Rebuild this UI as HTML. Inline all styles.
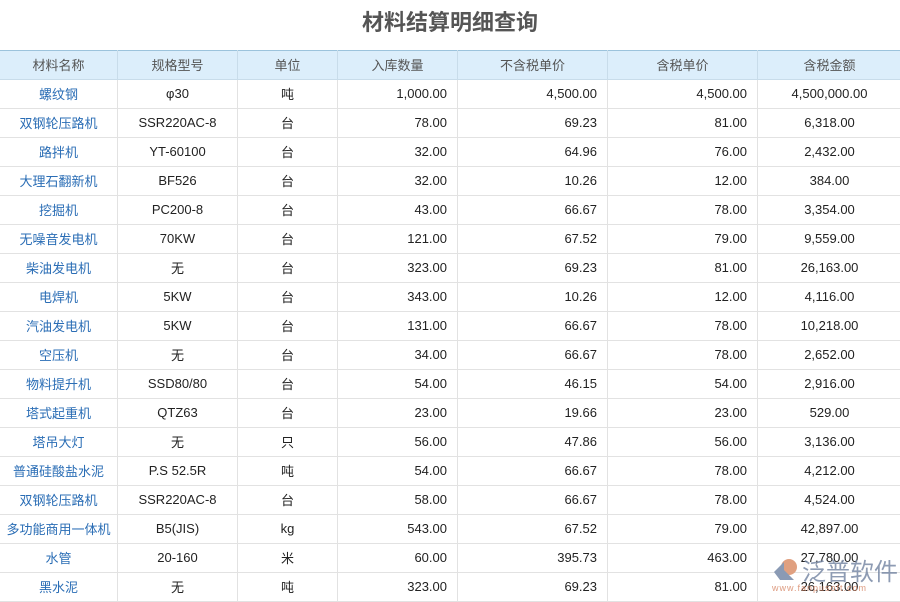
<!DOCTYPE html><html><head><meta charset="utf-8"><style>
body{margin:0;width:900px;height:600px;overflow:hidden;background:#fff;font-family:"Liberation Sans","Noto Sans CJK SC",sans-serif;position:relative}
h1{margin:0;height:50px;line-height:46px;text-align:center;font-size:22px;color:#555;font-weight:bold}
table{border-collapse:collapse;table-layout:fixed;width:902px;margin-left:-1px;font-size:13px;color:#222}
td,th{border:1px solid #e2e2e2;height:26px;padding:0 10px 2px;white-space:nowrap;overflow:hidden}
th{background:#dceefb;color:#555;font-weight:normal;border-color:#c8dcea;border-top:1px solid #9cc3dc}
td:nth-child(1){color:#2a6db5;text-align:center;padding:0 0 2px}
td:nth-child(2),td:nth-child(3),td:nth-child(7){text-align:center}
td:nth-child(4),td:nth-child(5),td:nth-child(6){text-align:right}
.wm{position:absolute;left:802px;top:552px;font-size:24px;color:#7a8aa6;opacity:.85}
.wm small{display:block;font-size:9px;color:#d88a6a;margin-left:-30px;margin-top:-4px;letter-spacing:1px}
</style></head><body>
<h1>材料结算明细查询</h1>
<table><colgroup><col style="width:118px"><col style="width:120px"><col style="width:100px"><col style="width:120px"><col style="width:150px"><col style="width:150px"><col style="width:144px"></colgroup>
<tr><th>材料名称</th><th>规格型号</th><th>单位</th><th>入库数量</th><th>不含税单价</th><th>含税单价</th><th>含税金额</th></tr>
<tr><td>螺纹钢</td><td>φ30</td><td>吨</td><td>1,000.00</td><td>4,500.00</td><td>4,500.00</td><td>4,500,000.00</td></tr>
<tr><td>双钢轮压路机</td><td>SSR220AC-8</td><td>台</td><td>78.00</td><td>69.23</td><td>81.00</td><td>6,318.00</td></tr>
<tr><td>路拌机</td><td>YT-60100</td><td>台</td><td>32.00</td><td>64.96</td><td>76.00</td><td>2,432.00</td></tr>
<tr><td>大理石翻新机</td><td>BF526</td><td>台</td><td>32.00</td><td>10.26</td><td>12.00</td><td>384.00</td></tr>
<tr><td>挖掘机</td><td>PC200-8</td><td>台</td><td>43.00</td><td>66.67</td><td>78.00</td><td>3,354.00</td></tr>
<tr><td>无噪音发电机</td><td>70KW</td><td>台</td><td>121.00</td><td>67.52</td><td>79.00</td><td>9,559.00</td></tr>
<tr><td>柴油发电机</td><td>无</td><td>台</td><td>323.00</td><td>69.23</td><td>81.00</td><td>26,163.00</td></tr>
<tr><td>电焊机</td><td>5KW</td><td>台</td><td>343.00</td><td>10.26</td><td>12.00</td><td>4,116.00</td></tr>
<tr><td>汽油发电机</td><td>5KW</td><td>台</td><td>131.00</td><td>66.67</td><td>78.00</td><td>10,218.00</td></tr>
<tr><td>空压机</td><td>无</td><td>台</td><td>34.00</td><td>66.67</td><td>78.00</td><td>2,652.00</td></tr>
<tr><td>物料提升机</td><td>SSD80/80</td><td>台</td><td>54.00</td><td>46.15</td><td>54.00</td><td>2,916.00</td></tr>
<tr><td>塔式起重机</td><td>QTZ63</td><td>台</td><td>23.00</td><td>19.66</td><td>23.00</td><td>529.00</td></tr>
<tr><td>塔吊大灯</td><td>无</td><td>只</td><td>56.00</td><td>47.86</td><td>56.00</td><td>3,136.00</td></tr>
<tr><td>普通硅酸盐水泥</td><td>P.S 52.5R</td><td>吨</td><td>54.00</td><td>66.67</td><td>78.00</td><td>4,212.00</td></tr>
<tr><td>双钢轮压路机</td><td>SSR220AC-8</td><td>台</td><td>58.00</td><td>66.67</td><td>78.00</td><td>4,524.00</td></tr>
<tr><td>多功能商用一体机</td><td>B5(JIS)</td><td>kg</td><td>543.00</td><td>67.52</td><td>79.00</td><td>42,897.00</td></tr>
<tr><td>水管</td><td>20-160</td><td>米</td><td>60.00</td><td>395.73</td><td>463.00</td><td>27,780.00</td></tr>
<tr><td>黑水泥</td><td>无</td><td>吨</td><td>323.00</td><td>69.23</td><td>81.00</td><td>26,163.00</td></tr>
</table>
<svg style="position:absolute;left:770px;top:556px" width="30" height="30" viewBox="0 0 30 30"><circle cx="19" cy="11" r="8" fill="#e0a080"/><path d="M4 16 L14 6 L14 14 L24 24 L10 24 Z" fill="#8a9ab4"/></svg>
<div class="wm">泛普软件<small>www.fanpusoft.com</small></div>
</body></html>
